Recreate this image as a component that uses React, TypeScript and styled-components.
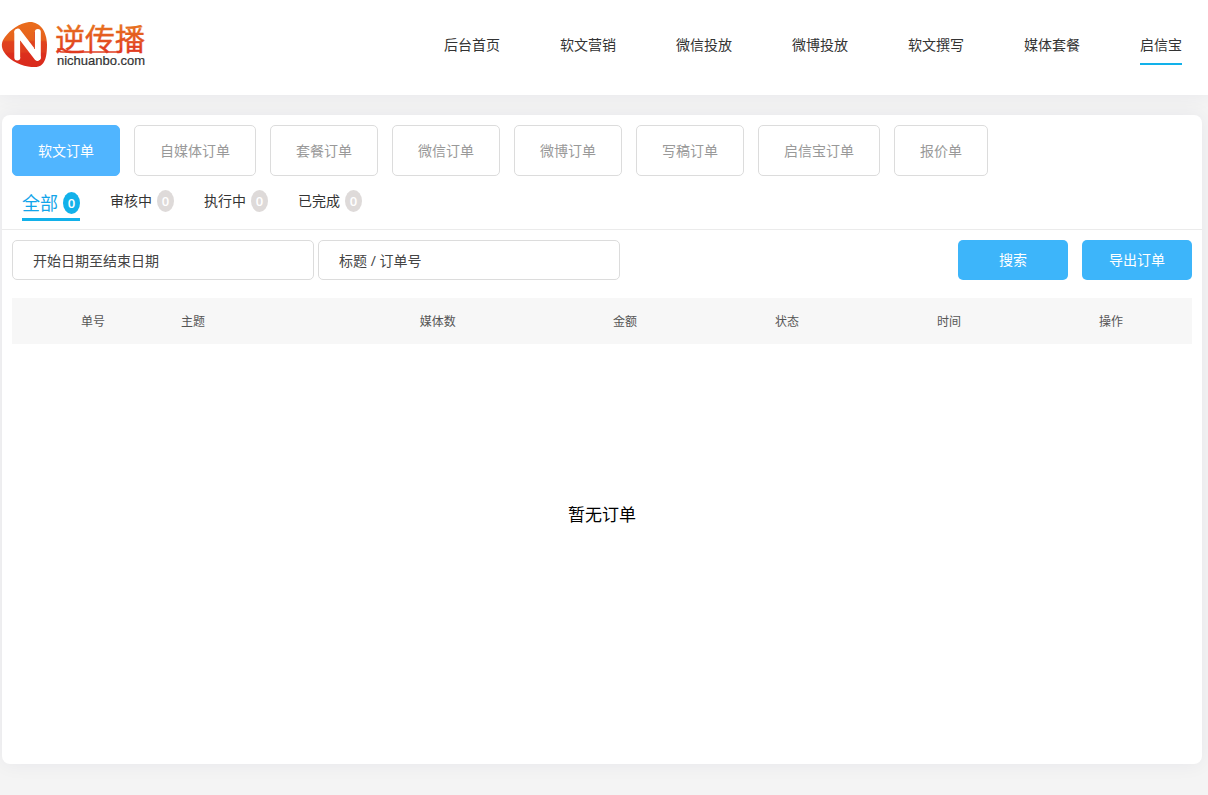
import React, { useState } from "react";
import styled, { createGlobalStyle } from "styled-components";

const sans = `"Open Sans", "Noto Sans CJK SC", sans-serif`;

const GlobalStyle = createGlobalStyle`
  *, *::before, *::after { box-sizing: border-box; }
  body {
    margin: 0;
    min-height: 100vh;
    background: #f4f4f4;
    color: #333;
    font: 14px/20px ${sans};
  }
  button, input { font: inherit; }
`;

const Header = styled.header`
  display: flex;
  justify-content: space-between;
  align-items: flex-start;
  height: 95px;
  padding: 20px 26px 0 0;
  background: #fff;
  box-shadow: 0 0 20px rgba(40, 40, 90, 0.06);
`;

const LogoLink = styled.a`
  display: block;
  line-height: 0;
`;

const MainNav = styled.nav`
  display: flex;
  gap: 60px;
  padding-top: 15px;
`;

const NavLink = styled.a<{ $active?: boolean }>`
  height: 30px;
  border-bottom: 2px solid ${(p) => (p.$active ? "#12b1ea" : "transparent")};
  color: #333;
  text-decoration: none;
  white-space: nowrap;
`;

const Main = styled.main`
  padding: 20px 6px 31px 2px;
`;

const Card = styled.section`
  border-radius: 8px;
  background: #fff;
  box-shadow: 0 0 20px rgba(40, 40, 90, 0.06);
`;

const OrderTypes = styled.div`
  display: flex;
  flex-wrap: wrap;
  gap: 14px;
  padding: 10px 10px 0;
`;

const TypeButton = styled.button<{ $active: boolean }>`
  height: 51px;
  padding: 0 25px;
  border: 1px solid ${(p) => (p.$active ? "#50b5ff" : "#dcdcdc")};
  border-radius: 5px;
  background: ${(p) => (p.$active ? "#50b5ff" : "#fff")};
  color: ${(p) => (p.$active ? "#fff" : "#999")};
  cursor: pointer;
`;

const StatusBar = styled.div`
  display: flex;
  align-items: flex-start;
  gap: 30px;
  height: 54px;
  padding: 12px 20px 0;
  border-bottom: 1px solid #ebebeb;
`;

const StatusButton = styled.button<{ $active: boolean }>`
  display: flex;
  align-items: center;
  gap: 5px;
  height: ${(p) => (p.$active ? 33 : 26)}px;
  padding: 0;
  border: 0;
  border-bottom: ${(p) => (p.$active ? "3px solid #12b1ea" : "0")};
  background: none;
  color: ${(p) => (p.$active ? "#12a5ea" : "#333")};
  font-size: ${(p) => (p.$active ? 18 : 14)}px;
  line-height: 18px;
  cursor: pointer;
`;

const Count = styled.span<{ $active: boolean }>`
  width: 17px;
  height: 22px;
  border-radius: 50%;
  background: ${(p) => (p.$active ? "#12b1ea" : "#dedad9")};
  color: #fff;
  font-size: 13px;
  font-weight: 600;
  line-height: 22px;
  text-align: center;
`;

const Filters = styled.form`
  display: flex;
  gap: 14px;
  padding: 10px 10px 18px;
`;

const Fields = styled.div`
  display: flex;
  flex: 1;
  gap: 4px;
`;

const Field = styled.input`
  width: 302px;
  min-width: 0;
  height: 40px;
  padding: 0 20px;
  border: 1px solid #dcdcdc;
  border-radius: 5px;
  background: #fff;
  color: #444;
  &::placeholder { color: #444; opacity: 1; }
`;

const ActionButton = styled.button`
  width: 110px;
  height: 40px;
  padding: 0;
  border: 0;
  border-radius: 5px;
  background: #3db5fa;
  color: #fff;
  cursor: pointer;
`;

const TableWrap = styled.div`
  padding: 0 10px;
`;

const Table = styled.table`
  width: 100%;
  table-layout: fixed;
  border-collapse: collapse;
`;

const HeadCell = styled.th<{ $width?: string; $left?: boolean }>`
  width: ${(p) => p.$width ?? "auto"};
  height: 46px;
  padding: 2px 7px 0;
  background: #f7f7f7;
  color: #555;
  font-size: 12px;
  font-weight: 400;
  text-align: ${(p) => (p.$left ? "left" : "center")};
`;

const EmptyCell = styled.td`
  height: 420px;
  padding: 161px 0 0;
  color: #000;
  font-size: 17px;
  text-align: center;
  vertical-align: top;
`;

const LogoWord = styled.text`
  font-family: "Liberation Sans", "Noto Sans CJK SC", sans-serif;
  font-size: 30px;
`;

const LogoDomain = styled.text`
  font-family: "Liberation Sans", sans-serif;
  font-size: 13px;
`;

function Logo() {
  return (
    <svg width="150" height="52" viewBox="0 20 150 52" overflow="visible" role="img" aria-label="逆传播">
      <defs>
        <linearGradient id="mark" x1="0" y1="0" x2="0" y2="1">
          <stop offset="0" stopColor="#ea6d1c" />
          <stop offset="0.4" stopColor="#e6611d" />
          <stop offset="0.44" stopColor="#e0431f" />
          <stop offset="0.66" stopColor="#df3d1f" />
          <stop offset="0.7" stopColor="#dc2f1d" />
          <stop offset="1" stopColor="#d92a1c" />
        </linearGradient>
        <linearGradient id="word" gradientUnits="userSpaceOnUse" x1="0" y1="24" x2="0" y2="54">
          <stop offset="0" stopColor="#e8741f" />
          <stop offset="1" stopColor="#df3420" />
        </linearGradient>
      </defs>
      <path
        d="M29 22C34 21.500 39 24 42 28C45 32 47 38 47 45C47 53 46 61 42 64.500C39 67.500 34 67.500 28 66.500C18 65 8 59 4 52C1 47 1 42 5 37C10 30 20 23 29 22Z"
        fill="url(#mark)"
      />
      <g fill="none" stroke="#fff" strokeLinecap="round">
        <path d="M17.300 32V57.500" strokeWidth="6" />
        <path d="M37.800 32V57.500" strokeWidth="6" />
        <path d="M17.800 32L37.300 57.500" strokeWidth="6.500" />
      </g>
      <path d="M20.500 41V57M34.500 32V49" stroke="#df421f" strokeWidth="0.700" />
      <LogoWord x="55" y="50" fill="url(#word)" stroke="url(#word)" strokeWidth="0.400">逆传播</LogoWord>
      <path d="M58 48Q58 52 62 52H117Q121 52 121 48" fill="none" stroke="#df3d20" strokeWidth="1.500" />
      <LogoDomain x="57" y="65" fill="#333" stroke="#333" strokeWidth="0.200">nichuanbo.com</LogoDomain>
    </svg>
  );
}

const navItems = ["后台首页", "软文营销", "微信投放", "微博投放", "软文撰写", "媒体套餐", "启信宝"];
const orderTypes = ["软文订单", "自媒体订单", "套餐订单", "微信订单", "微博订单", "写稿订单", "启信宝订单", "报价单"];
const statuses = ["全部", "审核中", "执行中", "已完成"];
const columns = [
  { title: "单号", width: "162px" },
  { title: "主题", left: true },
  { title: "媒体数", width: "18%" },
  { title: "金额", width: "162px" },
  { title: "状态", width: "162px" },
  { title: "时间", width: "162px" },
  { title: "操作", width: "162px" },
];

export default function App() {
  const [type, setType] = useState(0);
  const [status, setStatus] = useState(0);

  return (
    <>
      <GlobalStyle />
      <Header>
        <LogoLink href="#"><Logo /></LogoLink>
        <MainNav>
          {navItems.map((item, i) => (
            <NavLink key={item} href="#" $active={i === navItems.length - 1}>{item}</NavLink>
          ))}
        </MainNav>
      </Header>
      <Main>
        <Card>
          <OrderTypes>
            {orderTypes.map((item, i) => (
              <TypeButton key={item} type="button" $active={i === type} onClick={() => setType(i)}>
                {item}
              </TypeButton>
            ))}
          </OrderTypes>
          <StatusBar>
            {statuses.map((item, i) => (
              <StatusButton key={item} type="button" $active={i === status} onClick={() => setStatus(i)}>
                {item}
                <Count $active={i === status}>0</Count>
              </StatusButton>
            ))}
          </StatusBar>
          <Filters onSubmit={(e) => e.preventDefault()}>
            <Fields>
              <Field type="text" aria-label="开始日期至结束日期" placeholder="开始日期至结束日期" />
              <Field type="text" aria-label="标题 / 订单号" placeholder="标题 / 订单号" />
            </Fields>
            <ActionButton type="submit">搜索</ActionButton>
            <ActionButton type="button">导出订单</ActionButton>
          </Filters>
          <TableWrap>
            <Table>
              <thead>
                <tr>
                  {columns.map((c) => (
                    <HeadCell key={c.title} scope="col" $width={c.width} $left={c.left}>{c.title}</HeadCell>
                  ))}
                </tr>
              </thead>
              <tbody>
                <tr>
                  <EmptyCell colSpan={columns.length}>暂无订单</EmptyCell>
                </tr>
              </tbody>
            </Table>
          </TableWrap>
        </Card>
      </Main>
    </>
  );
}
